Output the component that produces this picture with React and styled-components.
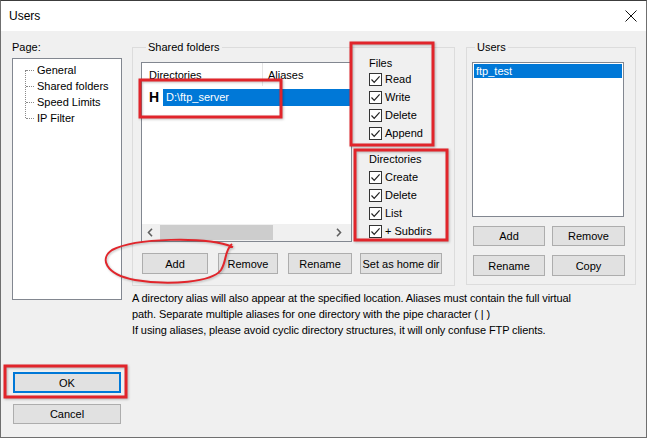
import React from "react";
import styled, { createGlobalStyle } from "styled-components";

const GlobalStyle = createGlobalStyle`
  * { box-sizing: border-box; }
  html, body { margin: 0; padding: 0; background: #f0f0f0; }
  body {
    font-family: "Liberation Sans", Arial, sans-serif;
    font-size: 11px;
    color: #000;
  }
`;

const Window = styled.div`
  position: relative;
  width: 647px;
  height: 438px;
  background: #f0f0f0;
  border: 1px solid #6f6f6f;
  border-top-color: #3c3c3c;
  display: flex;
  flex-direction: column;
  overflow: hidden;
`;

const TitleBar = styled.div`
  height: 30px;
  background: #fff;
  display: flex;
  align-items: center;
  justify-content: space-between;
  padding: 0 9px 0 8px;
  font-size: 12px;
`;

const CloseIcon = () => (
  <svg width="12" height="12" viewBox="0 0 12 12">
    <path d="M0.5 0.5 L11.5 11.5 M11.5 0.5 L0.5 11.5" stroke="#111" strokeWidth="1" fill="none" />
  </svg>
);

const Body = styled.div`
  flex: 1;
  display: flex;
  padding: 10px 0 0 11px;
`;

const LeftCol = styled.div`
  width: 110px;
  display: flex;
  flex-direction: column;
`;

const Label = styled.div`
  line-height: 13px;
  height: 13px;
  white-space: nowrap;
`;

const Tree = styled.div`
  margin-top: 4px;
  height: 242px;
  background: #fff;
  border: 1px solid #828790;
  padding-top: 3px;
`;

const TreeList = styled.div`
  position: relative;
  &::before {
    content: "";
    position: absolute;
    left: 12px;
    top: 8px;
    height: 48px;
    border-left: 1px dotted #8a8a8a;
  }
`;

const TreeItem = styled.div`
  position: relative;
  height: 16px;
  line-height: 16px;
  padding-left: 24px;
  white-space: nowrap;
  &::before {
    content: "";
    position: absolute;
    left: 13px;
    top: 8px;
    width: 8px;
    border-top: 1px dotted #8a8a8a;
  }
`;

const Button = styled.div`
  height: ${({ $h }) => $h || 21}px;
  width: ${({ $w }) => ($w ? `${$w}px` : "auto")};
  margin-left: ${({ $ml }) => $ml || 0}px;
  background: #e1e1e1;
  border: ${({ $default }) => ($default ? "2px solid #0078d7" : "1px solid #adadad")};
  display: flex;
  align-items: center;
  justify-content: center;
  white-space: nowrap;
  font-size: 11px;
  flex-shrink: 0;
`;

const DialogButtons = styled.div`
  margin-top: 72px;
  padding-left: 1px;
  display: flex;
  flex-direction: column;
  gap: 11px;
`;

const Main = styled.div`
  margin-left: 10px;
  display: flex;
  flex-direction: column;
`;

const TopRow = styled.div`
  display: flex;
  align-items: flex-start;
  gap: 11px;
`;

const Group = styled.fieldset`
  margin: 0;
  width: ${({ $w }) => $w}px;
  border: 1px solid #dcdcdc;
  padding: ${({ $pad }) => $pad};
  min-width: 0;
`;

const Legend = styled.legend`
  padding: 0 2px;
  margin-left: ${({ $ml }) => $ml}px;
  line-height: 13px;
  font-size: 11px;
`;

const SharedContent = styled.div`
  display: flex;
  align-items: flex-start;
`;

const ListView = styled.div`
  margin-top: 7px;
  width: 211px;
  height: 180px;
  background: #fff;
  border: 1px solid #828790;
  display: flex;
  flex-direction: column;
`;

const Header = styled.div`
  height: 23px;
  display: flex;
  align-items: center;
`;

const HeaderCell = styled.div`
  width: ${({ $w }) => ($w ? `${$w}px` : "auto")};
  flex: ${({ $w }) => ($w ? "none" : 1)};
  height: 100%;
  display: flex;
  align-items: center;
  padding-left: ${({ $pl }) => $pl}px;
  border-right: ${({ $sep }) => ($sep ? "1px solid #e5e5e5" : "none")};
`;

const Row = styled.div`
  margin-top: 3px;
  height: 17px;
  display: flex;
  align-items: center;
`;

const HomeMark = styled.div`
  width: 21px;
  padding-left: 7px;
  font-weight: bold;
  font-size: 14px;
  line-height: 17px;
`;

const Selected = styled.div`
  flex: 1;
  height: 17px;
  line-height: 17px;
  background: #0078d7;
  color: #fff;
  padding-left: 3px;
  white-space: nowrap;
`;

const Spacer = styled.div`
  flex: 1;
`;

const HScroll = styled.div`
  height: 17px;
  background: #f0f0f0;
  display: flex;
  align-items: center;
  padding: 0 9px 0 5px;
`;

const Thumb = styled.div`
  width: 113px;
  height: 15px;
  background: #cdcdcd;
  margin-left: 6px;
`;

const Chevron = ({ dir }) => (
  <svg width="7" height="9" viewBox="0 0 7 9">
    <path
      d={dir === "left" ? "M5 0.8 L1.5 4.5 L5 8.2" : "M2 0.8 L5.5 4.5 L2 8.2"}
      stroke="#606060"
      strokeWidth="1.6"
      fill="none"
    />
  </svg>
);

const CheckCol = styled.div`
  margin-left: 17px;
  padding-top: 1px;
  display: flex;
  flex-direction: column;
`;

const SectionLabel = styled.div`
  height: 14px;
  line-height: 14px;
  margin-top: ${({ $mt }) => $mt || 0}px;
  margin-bottom: ${({ $mb }) => $mb || 0}px;
`;

const CheckRow = styled.div`
  height: 18px;
  display: flex;
  align-items: center;
  white-space: nowrap;
`;

const Box = styled.span`
  width: 13px;
  height: 13px;
  border: 1px solid #333;
  background: #fff;
  margin-right: 3px;
  display: flex;
  align-items: center;
  justify-content: center;
`;

const Check = ({ children }) => (
  <CheckRow>
    <Box>
      <svg width="11" height="11" viewBox="0 0 11 11">
        <path d="M1.5 5.5 L4.2 8.3 L9.6 2.4" stroke="#222" strokeWidth="1.2" fill="none" />
      </svg>
    </Box>
    {children}
  </CheckRow>
);

const ButtonRow = styled.div`
  margin-top: 11px;
  padding-left: 1px;
  display: flex;
  gap: ${({ $gap }) => $gap}px;
`;

const UsersList = styled.div`
  margin-top: 8px;
  width: 152px;
  height: 155px;
  background: #fff;
  border: 1px solid #828790;
  padding: 1px;
`;

const UserItem = styled.div`
  height: 14px;
  line-height: 14px;
  padding-left: 2px;
  background: #0078d7;
  color: #fff;
`;

const UserButtons = styled.div`
  margin-top: 9px;
  padding-left: 1px;
  display: grid;
  grid-template-columns: 72px 73px;
  column-gap: 7px;
  row-gap: 9px;
`;

const Note = styled.div`
  margin-top: 4px;
  line-height: 16px;
  white-space: nowrap;
  letter-spacing: -0.1px;
`;

const Annotations = styled.svg`
  position: absolute;
  top: -1px;
  left: -1px;
  pointer-events: none;
  filter: drop-shadow(1px 1px 1px rgba(0, 0, 0, 0.25));
`;

const RED = "#e1252b";

export default function App() {
  return (
    <>
      <GlobalStyle />
      <Window>
        <TitleBar>
          <span>Users</span>
          <CloseIcon />
        </TitleBar>
        <Body>
          <LeftCol>
            <Label>Page:</Label>
            <Tree>
              <TreeList>
                <TreeItem>General</TreeItem>
                <TreeItem>Shared folders</TreeItem>
                <TreeItem>Speed Limits</TreeItem>
                <TreeItem>IP Filter</TreeItem>
              </TreeList>
            </Tree>
            <DialogButtons>
              <Button $w={108} $default>OK</Button>
              <Button $w={108} $h={20}>Cancel</Button>
            </DialogButtons>
          </LeftCol>

          <Main>
            <TopRow>
              <Group $w={323} $pad="1px 0 11px 8px">
                <Legend $ml={5}>Shared folders</Legend>
                <SharedContent>
                  <ListView>
                    <Header>
                      <HeaderCell $w={121} $pl={7} $sep>Directories</HeaderCell>
                      <HeaderCell $pl={5}>Aliases</HeaderCell>
                    </Header>
                    <Row>
                      <HomeMark>H</HomeMark>
                      <Selected>D:\ftp_server</Selected>
                    </Row>
                    <Spacer />
                    <HScroll>
                      <Chevron dir="left" />
                      <Thumb />
                      <Spacer />
                      <Chevron dir="right" />
                    </HScroll>
                  </ListView>
                  <CheckCol>
                    <SectionLabel>Files</SectionLabel>
                    <Check>Read</Check>
                    <Check>Write</Check>
                    <Check>Delete</Check>
                    <Check>Append</Check>
                    <SectionLabel $mt={10} $mb={2}>Directories</SectionLabel>
                    <Check>Create</Check>
                    <Check>Delete</Check>
                    <Check>List</Check>
                    <Check>+ Subdirs</Check>
                  </CheckCol>
                </SharedContent>
                <ButtonRow $gap={10}>
                  <Button $w={66}>Add</Button>
                  <Button $w={60}>Remove</Button>
                  <Button $w={64}>Rename</Button>
                  <Button $w={82} $ml={-2}>Set as home dir</Button>
                </ButtonRow>
              </Group>

              <Group $w={170} $pad="0 0 8px 5px">
                <Legend $ml={3}>Users</Legend>
                <UsersList>
                  <UserItem>ftp_test</UserItem>
                </UsersList>
                <UserButtons>
                  <Button $h={20}>Add</Button>
                  <Button $h={20}>Remove</Button>
                  <Button>Rename</Button>
                  <Button>Copy</Button>
                </UserButtons>
              </Group>
            </TopRow>

            <Note>
              <div>A directory alias will also appear at the specified location. Aliases must contain the full virtual</div>
              <div>path. Separate multiple aliases for one directory with the pipe character ( | )</div>
              <div>If using aliases, please avoid cyclic directory structures, it will only confuse FTP clients.</div>
            </Note>
          </Main>
        </Body>

        <Annotations width="647" height="438" viewBox="0 0 647 438">
          <g fill="none" stroke={RED} strokeWidth="3">
            <rect x="140" y="80" width="141" height="37" />
            <rect x="351" y="43" width="82" height="102" />
            <rect x="355" y="150" width="92" height="90" />
            <rect x="5" y="366" width="121" height="31" />
            <path
              d="M233 247 C 205 236, 135 238, 112 250 C 100 258, 104 274, 135 280 C 170 286, 212 282, 221 270 C 227 261, 224 251, 232 244"
              strokeWidth="2"
            />
          </g>
        </Annotations>
      </Window>
    </>
  );
}
